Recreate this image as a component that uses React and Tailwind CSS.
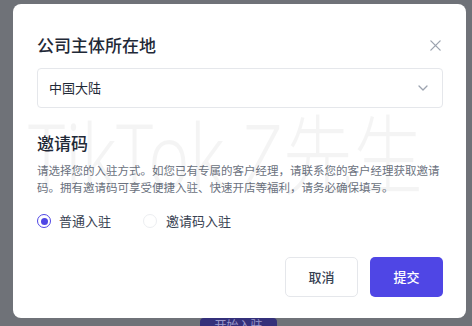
import { useState } from "react";

export default function App() {
  const [mode, setMode] = useState("normal");

  return (
    <div
      className="w-[472px] h-[326px] bg-[#6f7278] overflow-hidden flex flex-col"
      style={{ fontFamily: '"Noto Sans CJK SC", "Noto Sans", sans-serif' }}
    >
      {/* Modal */}
      <div className="relative mt-[4px] ml-[13px] w-[453px] h-[314px] shrink-0 bg-white rounded-[8px] pt-[30px] pl-[24px] pr-[23px]">
        <div className="flex items-center justify-between h-[22px]">
          <h2 className="text-[17px] font-medium text-[#1f2937] leading-[22px]">公司主体所在地</h2>
          <button className="mr-[1px] text-[#9ca3af]">
            <svg width="13" height="13" viewBox="0 0 14 14" fill="none" stroke="currentColor" strokeWidth="1.4" strokeLinecap="round">
              <path d="M2 2 L12 12 M12 2 L2 12" />
            </svg>
          </button>
        </div>

        {/* Select */}
        <div className="mt-[12px] h-[40px] border border-[#e5e7eb] rounded-[4px] flex items-center justify-between pl-[11px] pr-[14px]">
          <span className="text-[13px] text-[#1f2937]">中国大陆</span>
          <svg width="10" height="6" viewBox="0 0 10 6" fill="none" stroke="#9ca3af" strokeWidth="1.3" strokeLinecap="round" strokeLinejoin="round">
            <path d="M1 1 L5 5 L9 1" />
          </svg>
        </div>

        <h3 className="mt-[24px] text-[17px] font-medium text-[#1f2937] leading-[22px]">邀请码</h3>
        <p className="mt-[8px] text-[11.5px] leading-[17px] text-[#6b7280] w-[406px]">
          请选择您的入驻方式。如您已有专属的客户经理，请联系您的客户经理获取邀请码。拥有邀请码可享受便捷入驻、快速开店等福利，请务必确保填写。
        </p>

        {/* Radios */}
        <div className="mt-[15px] flex items-center h-[20px]">
          <label className="flex items-center cursor-pointer" onClick={() => setMode("normal")}>
            <span
              className={`w-[14px] h-[14px] rounded-full flex items-center justify-center border ${
                mode === "normal" ? "border-[#4f46e5]" : "border-[#eceef1]"
              }`}
            >
              {mode === "normal" && <span className="w-[7px] h-[7px] rounded-full bg-[#4f46e5]" />}
            </span>
            <span className="ml-[8px] text-[13px] text-[#374151]">普通入驻</span>
          </label>
          <label className="ml-[32px] flex items-center cursor-pointer" onClick={() => setMode("code")}>
            <span
              className={`w-[14px] h-[14px] rounded-full flex items-center justify-center border ${
                mode === "code" ? "border-[#4f46e5]" : "border-[#eceef1]"
              }`}
            >
              {mode === "code" && <span className="w-[7px] h-[7px] rounded-full bg-[#4f46e5]" />}
            </span>
            <span className="ml-[9px] text-[13px] text-[#374151]">邀请码入驻</span>
          </label>
        </div>

        {/* Footer */}
        <div className="mt-[26px] flex justify-end gap-[12px]">
          <button className="w-[73px] h-[40px] rounded-[5px] border border-[#e5e7eb] bg-white text-[13px] font-medium text-[#374151]">
            取消
          </button>
          <button className="w-[73px] h-[40px] rounded-[5px] bg-[#4f46e5] text-[13px] font-medium text-white">
            提交
          </button>
        </div>

        {/* Watermark */}
        <div
          className="absolute left-[15px] top-[106px] origin-top scale-y-125 text-[70px] font-light leading-none text-black/[0.045] whitespace-nowrap pointer-events-none select-none"
          style={{ fontFamily: '"Noto Sans", "Noto Sans CJK SC", sans-serif' }}
        >
          TikTok Z先生
        </div>
      </div>

      {/* Page behind overlay */}
      <div className="ml-[200px] w-[77px] h-[24px] shrink-0 bg-[#34307a] rounded-[4px] flex justify-center pt-[1px]">
        <span className="text-[12px] leading-[12px] text-[#9a98c9]">开始入驻</span>
      </div>
    </div>
  );
}
